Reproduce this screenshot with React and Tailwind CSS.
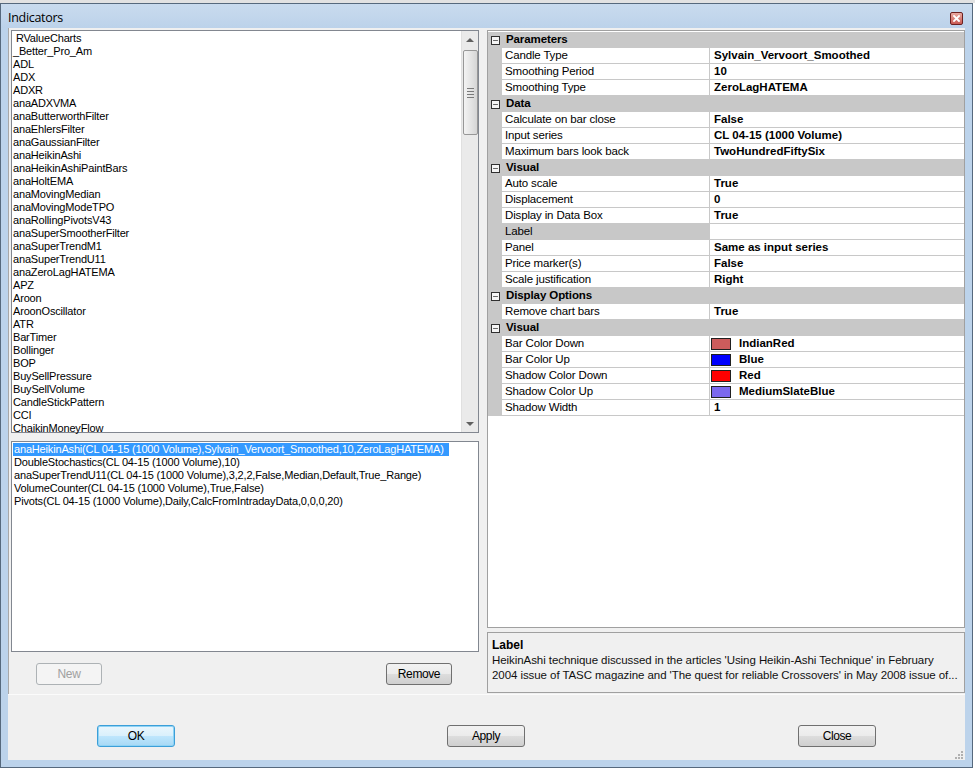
import { Minus } from 'lucide-react';

const indicators = [
  ' RValueCharts', '_Better_Pro_Am', 'ADL', 'ADX', 'ADXR', 'anaADXVMA', 'anaButterworthFilter',
  'anaEhlersFilter', 'anaGaussianFilter', 'anaHeikinAshi', 'anaHeikinAshiPaintBars', 'anaHoltEMA',
  'anaMovingMedian', 'anaMovingModeTPO', 'anaRollingPivotsV43', 'anaSuperSmootherFilter',
  'anaSuperTrendM1', 'anaSuperTrendU11', 'anaZeroLagHATEMA', 'APZ', 'Aroon', 'AroonOscillator',
  'ATR', 'BarTimer', 'Bollinger', 'BOP', 'BuySellPressure', 'BuySellVolume', 'CandleStickPattern',
  'CCI', 'ChaikinMoneyFlow',
];

const applied = [
  'anaHeikinAshi(CL 04-15 (1000 Volume),Sylvain_Vervoort_Smoothed,10,ZeroLagHATEMA)',
  'DoubleStochastics(CL 04-15 (1000 Volume),10)',
  'anaSuperTrendU11(CL 04-15 (1000 Volume),3,2,2,False,Median,Default,True_Range)',
  'VolumeCounter(CL 04-15 (1000 Volume),True,False)',
  'Pivots(CL 04-15 (1000 Volume),Daily,CalcFromIntradayData,0,0,0,20)',
];

// property grid rows, cat = category header
const rows = [
  { cat: 'Parameters' },
  { name: 'Candle Type', value: 'Sylvain_Vervoort_Smoothed' },
  { name: 'Smoothing Period', value: '10' },
  { name: 'Smoothing Type', value: 'ZeroLagHATEMA' },
  { cat: 'Data' },
  { name: 'Calculate on bar close', value: 'False' },
  { name: 'Input series', value: 'CL 04-15 (1000 Volume)' },
  { name: 'Maximum bars look back', value: 'TwoHundredFiftySix' },
  { cat: 'Visual' },
  { name: 'Auto scale', value: 'True' },
  { name: 'Displacement', value: '0' },
  { name: 'Display in Data Box', value: 'True' },
  { name: 'Label', value: '', readonly: true },
  { name: 'Panel', value: 'Same as input series' },
  { name: 'Price marker(s)', value: 'False' },
  { name: 'Scale justification', value: 'Right' },
  { cat: 'Display Options' },
  { name: 'Remove chart bars', value: 'True' },
  { cat: 'Visual' },
  { name: 'Bar Color Down', value: 'IndianRed', color: 'bg-[#cd5c5c]' },
  { name: 'Bar Color Up', value: 'Blue', color: 'bg-[#0000ff]' },
  { name: 'Shadow Color Down', value: 'Red', color: 'bg-[#ff0000]' },
  { name: 'Shadow Color Up', value: 'MediumSlateBlue', color: 'bg-[#7b68ee]' },
  { name: 'Shadow Width', value: '1' },
];

function WinButton({ label, focused, disabled, small, className = '' }) {
  let look = 'border-[#707070] bg-[linear-gradient(#f2f2f2_0%,#ebebeb_50%,#dddddd_51%,#cfcfcf_100%)] text-black';
  if (focused) look = 'border-[#3c9fd8] bg-[linear-gradient(#eaf6fd_0%,#d9f0fc_50%,#bee6fd_51%,#a7d9f5_100%)] shadow-[inset_0_0_0_1px_#8fd3f5] text-black';
  if (disabled) look = 'border-[#adb2b5] bg-[#f4f4f4] text-[#a0a0a0]';
  const width = small ? 'w-[66px]' : 'w-[78px]';
  return (
    <button className={`h-[22px] ${width} rounded-[3px] border text-[12px] tracking-[-0.4px] flex items-center justify-center ${look} ${className}`}>
      {label}
    </button>
  );
}

function ScrollBar() {
  return (
    <div className="w-[17px] h-full bg-[#eaeaea] border-l border-[#e0e0e0] flex flex-col items-center">
      <div className="h-[17px] w-full flex items-center justify-center">
        <div className="w-0 h-0 border-l-[4px] border-r-[4px] border-b-[4px] border-l-transparent border-r-transparent border-b-[#606060]" />
      </div>
      <div className="mt-[2px] h-[85px] w-[15px] rounded-[2px] border border-[#979797] bg-[linear-gradient(90deg,#f3f3f3,#e2e2e2_60%,#d5d5d5)] flex flex-col items-center justify-center gap-[2px]">
        <div className="w-[7px] h-px bg-[#7a7a7a]" />
        <div className="w-[7px] h-px bg-[#7a7a7a]" />
        <div className="w-[7px] h-px bg-[#7a7a7a]" />
        <div className="w-[7px] h-px bg-[#7a7a7a]" />
      </div>
      <div className="flex-1" />
      <div className="h-[17px] w-full flex items-center justify-center">
        <div className="w-0 h-0 border-l-[4px] border-r-[4px] border-t-[4px] border-l-transparent border-r-transparent border-t-[#606060]" />
      </div>
    </div>
  );
}

function GridRow({ row }) {
  if (row.cat) {
    return (
      <div className="h-[16px] flex items-center bg-[#c8c8c8]">
        <div className="w-[14px] flex justify-center">
          <div className="w-[9px] h-[9px] border border-[#303030] bg-[#f4f4f4] flex items-center justify-center">
            <Minus size={7} strokeWidth={2} color="#000" />
          </div>
        </div>
        <div className="pl-[4px] font-bold text-[11.5px] tracking-[-0.1px]">{row.cat}</div>
      </div>
    );
  }
  return (
    <div className="h-[16px] flex bg-[#c8c8c8]">
      <div className="w-[14px]" />
      <div className={`w-[207px] h-[15px] pl-[3px] leading-[15px] tracking-[-0.15px] ${row.readonly ? 'bg-[#c8c8c8]' : 'bg-white'}`}>{row.name}</div>
      <div className="w-px" />
      <div className="flex-1 h-[15px] bg-white flex items-center font-bold pl-[4px] leading-[15px]">
        {row.color ? (
          <>
            <div className={`-ml-[3px] w-[20px] h-[12px] border border-[#202020] ${row.color}`} />
            <span className="ml-[8px]">{row.value}</span>
          </>
        ) : (
          row.value
        )}
      </div>
    </div>
  );
}

export default function App() {
  return (
    <div className="w-[975px] h-[771px] bg-white overflow-hidden font-['Liberation_Sans',Arial,sans-serif] text-[11.5px] text-black">
      <div className="h-[3px] bg-[#e2e2e2]" />
      <div className="w-[973px] h-[765px] border border-[#56697d] bg-[#bcd3eb] flex flex-col">
        {/* title bar */}
        <div className="h-[24px] pt-[4px] pl-[7px] pr-[9px] flex items-center justify-between bg-[linear-gradient(#c9dbee,#bcd2ea)]">
          <div className="text-[12.5px] text-black font-['Open_Sans',Arial,sans-serif] tracking-[-0.3px]">Indicators</div>
          <div className="w-[13px] h-[13px] rounded-[2px] border border-[#6b2020] bg-[linear-gradient(#e9a9a1,#c95a52)] flex items-center justify-center">
            <svg width="7" height="7" viewBox="0 0 7 7">
              <path d="M1 1 L6 6 M6 1 L1 6" stroke="#ffffff" strokeWidth="1.8" strokeLinecap="square" />
            </svg>
          </div>
        </div>

        {/* client area */}
        <div className="mx-[7px] h-[732px] bg-[#f0f0f0] flex flex-col">
          <div className="h-[666px] pl-[2px] pt-[2px] flex border-l border-[#a8a8a8]">
            {/* left column */}
            <div className="w-[468px] flex flex-col">
              <div className="h-[403px] border border-[#828790] bg-white flex text-[11px] tracking-[-0.17px]">
                <div className="flex-1 pl-px pt-px leading-[13px]">
                  {indicators.map((name, i) => (
                    <div key={i} className="h-[13px] whitespace-pre">{name}</div>
                  ))}
                </div>
                <ScrollBar />
              </div>
              <div className="mt-[8px] h-[211px] border border-[#828790] bg-white pl-px pt-px leading-[13px] text-[11px] tracking-[-0.17px]">
                {applied.map((line, i) => (
                  <div key={i} className={`h-[13px] w-fit pl-px pr-[5px] whitespace-pre ${i === 0 ? 'bg-[#3399ff] text-white' : ''}`}>
                    {line}
                  </div>
                ))}
              </div>
              <div className="mt-[11px] pl-[25px] pr-[27px] flex justify-between">
                <WinButton label="New" disabled small />
                <WinButton label="Remove" small />
              </div>
            </div>

            {/* right column */}
            <div className="ml-[8px] w-[478px] flex flex-col">
              <div className="h-[598px] border border-[#a0a0a0] bg-white pt-px">
                {rows.map((row, i) => (
                  <GridRow key={i} row={row} />
                ))}
              </div>
              <div className="mt-[4px] h-[61px] border border-[#a0a0a0] bg-[#f0f0f0] pl-[4px] pt-[5px]">
                <div className="font-bold text-[12px] leading-[15px]">Label</div>
                <div className="leading-[15px] text-[11.5px] text-[#101010] tracking-[-0.07px]">
                  <div>HeikinAshi technique discussed in the articles 'Using Heikin-Ashi Technique' in February</div>
                  <div>2004 issue of TASC magazine and 'The quest for reliable Crossovers' in May 2008 issue of...</div>
                </div>
              </div>
            </div>
          </div>

          {/* bottom button bar */}
          <div className="relative flex-1 border-t border-[#fbfbfb] pt-[30px] pl-[89px] flex items-start">
            <WinButton label="OK" focused />
            <WinButton label="Apply" className="ml-[272px]" />
            <WinButton label="Close" className="ml-[273px]" />
            <svg className="absolute right-[2px] bottom-[1px]" width="10" height="10" viewBox="0 0 10 10">
              <g fill="#b0b0b0">
                <rect x="8" y="2" width="2" height="2" />
                <rect x="5" y="5" width="2" height="2" />
                <rect x="8" y="5" width="2" height="2" />
                <rect x="2" y="8" width="2" height="2" />
                <rect x="5" y="8" width="2" height="2" />
                <rect x="8" y="8" width="2" height="2" />
              </g>
            </svg>
          </div>
        </div>
      </div>
    </div>
  );
}
